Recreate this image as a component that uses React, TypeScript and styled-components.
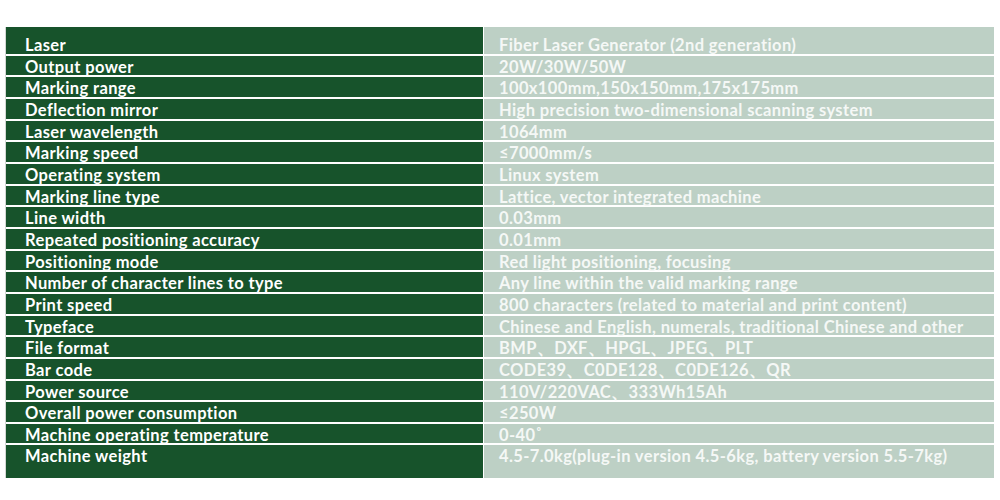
import styled, { createGlobalStyle } from "styled-components";

const Global = createGlobalStyle`
body {
  margin: 0;
  background: #ffffff;
  font-family: Lato, "Liberation Sans", sans-serif;
}
`;

const Page = styled.div`
width: 1000px;
height: 500px;
padding: 27px 6px 0 5px;
box-sizing: border-box;
`;

const Table = styled.div`
display: grid;
grid-template-columns: 477px 1fr;
row-gap: 2px;
background: #ffffff;
border-left: 1px solid #d4d8d5;
`;

const Cell = styled.div<{ $side: "key" | "value"; $first?: boolean; $last?: boolean }>`
background: ${(p) => (p.$side === "key" ? "#17532b" : "#bdd0c5")};
color: ${(p) => (p.$side === "key" ? "#ffffff" : "#f5f8f6")};
padding-left: ${(p) => (p.$side === "key" ? "19px" : "15px")};
padding-top: ${(p) => (p.$first ? "11px" : "4px")};
padding-bottom: ${(p) => (p.$last ? "13px" : "0")};
margin-left: ${(p) => (p.$side === "value" ? "1px" : "0")};
height: 15.67px;
line-height: 15.67px;
font-size: 16.5px;
font-weight: 700;
letter-spacing: 0.38px;
white-space: nowrap;
`;

const specs: [string, string][] = [
  ["Laser", "Fiber Laser Generator (2nd generation)"],
  ["Output power", "20W/30W/50W"],
  ["Marking range", "100x100mm,150x150mm,175x175mm"],
  ["Deflection mirror", "High precision two-dimensional scanning system"],
  ["Laser wavelength", "1064mm"],
  ["Marking speed", "≤7000mm/s"],
  ["Operating system", "Linux system"],
  ["Marking line type", "Lattice, vector integrated machine"],
  ["Line width", "0.03mm"],
  ["Repeated positioning accuracy", "0.01mm"],
  ["Positioning mode", "Red light positioning, focusing"],
  ["Number of character lines to type", "Any line within the valid marking range"],
  ["Print speed", "800 characters (related to material and print content)"],
  ["Typeface", "Chinese and English, numerals, traditional Chinese and other"],
  ["File format", "BMP、DXF、HPGL、JPEG、PLT"],
  ["Bar code", "CODE39、C0DE128、C0DE126、QR"],
  ["Power source", "110V/220VAC、333Wh15Ah"],
  ["Overall power consumption", "≤250W"],
  ["Machine operating temperature", "0-40˚"],
  ["Machine weight", "4.5-7.0kg(plug-in version 4.5-6kg, battery version 5.5-7kg)"],
];

export default function App() {
  return (
    <>
      <Global />
      <Page>
        <Table>
          {specs.map(([k, v], i) => {
            const first = i === 0;
            const last = i === specs.length - 1;
            return [
              <Cell key={k} $side="key" $first={first} $last={last}>{k}</Cell>,
              <Cell key={k + "-v"} $side="value" $first={first} $last={last}>{v}</Cell>,
            ];
          })}
        </Table>
      </Page>
    </>
  );
}
